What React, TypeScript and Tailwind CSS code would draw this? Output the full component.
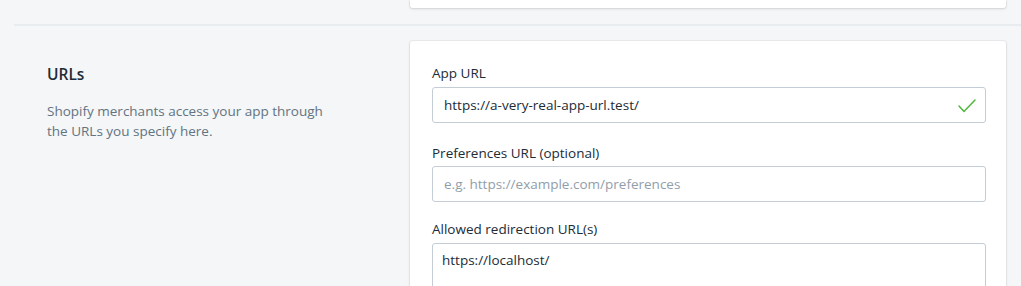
export default function App() {
  return (
    <div
      className="w-[1021px] h-[286px] overflow-hidden bg-[#f4f6f8] text-[#212b36]"
      style={{ fontFamily: '"Open Sans", "Noto Sans", sans-serif' }}
    >
      {/* Previous section card (cut off) */}
      <div className="pl-[410px] pr-[15px]">
        <div className="h-2 rounded-b-[3px] bg-white shadow-[0_0_0_1px_rgba(63,63,68,0.05),0_1px_3px_0_rgba(63,63,68,0.15)]" />
      </div>

      {/* Divider */}
      <div className="ml-[14px] mt-4 h-[2px] bg-[#e9ecef]" />

      {/* URLs section */}
      <div className="mt-[15px] flex pr-[15px]">
        <div className="w-[410px] shrink-0 pl-[47px] pt-[21px]">
          <h2 className="text-[15.5px] leading-6 font-semibold">URLs</h2>
          <p className="mt-[15px] w-[300px] text-[13.5px] leading-5 text-[#637381]">
            Shopify merchants access your app through the URLs you specify here.
          </p>
        </div>

        <div className="flex-1 rounded-[3px] bg-white pl-[22px] pr-5 pt-[22px] shadow-[0_0_0_1px_rgba(63,63,68,0.05),0_1px_3px_0_rgba(63,63,68,0.15)]">
          <label className="block text-[13.5px] leading-5 mb-1">App URL</label>
          <div className="relative">
            <input
              readOnly
              value="https://a-very-real-app-url.test/"
              className="block h-9 w-full rounded-[3px] border border-[#c4cdd5] pl-[11px] pr-10 text-[13.5px] text-[#212b36] outline-none"
            />
            <svg
              className="absolute right-[10px] top-[12px]"
              width="18"
              height="14"
              viewBox="0 0 18 14"
              fill="none"
            >
              <polyline
                points="1,7 6,12.5 17,1"
                stroke="#50b83c"
                strokeWidth="1.5"
                strokeLinecap="round"
                strokeLinejoin="round"
              />
            </svg>
          </div>

          <label className="mt-5 block text-[13.5px] leading-5 mb-[3px]">
            Preferences URL (optional)
          </label>
          <input
            readOnly
            placeholder="e.g. https://example.com/preferences"
            className="block h-9 w-full rounded-[3px] border border-[#c4cdd5] pl-[11px] text-[13.5px] text-[#212b36] placeholder:text-[#919eab] outline-none"
          />

          <label className="mt-[17px] block text-[13.5px] leading-5 mb-1">
            Allowed redirection URL(s)
          </label>
          <textarea
            readOnly
            value="https://localhost/"
            className="block h-[80px] w-full resize-none rounded-[3px] border border-[#c4cdd5] pl-[9px] pt-[6px] text-[13.5px] leading-5 text-[#212b36] outline-none"
          />
        </div>
      </div>
    </div>
  );
}
